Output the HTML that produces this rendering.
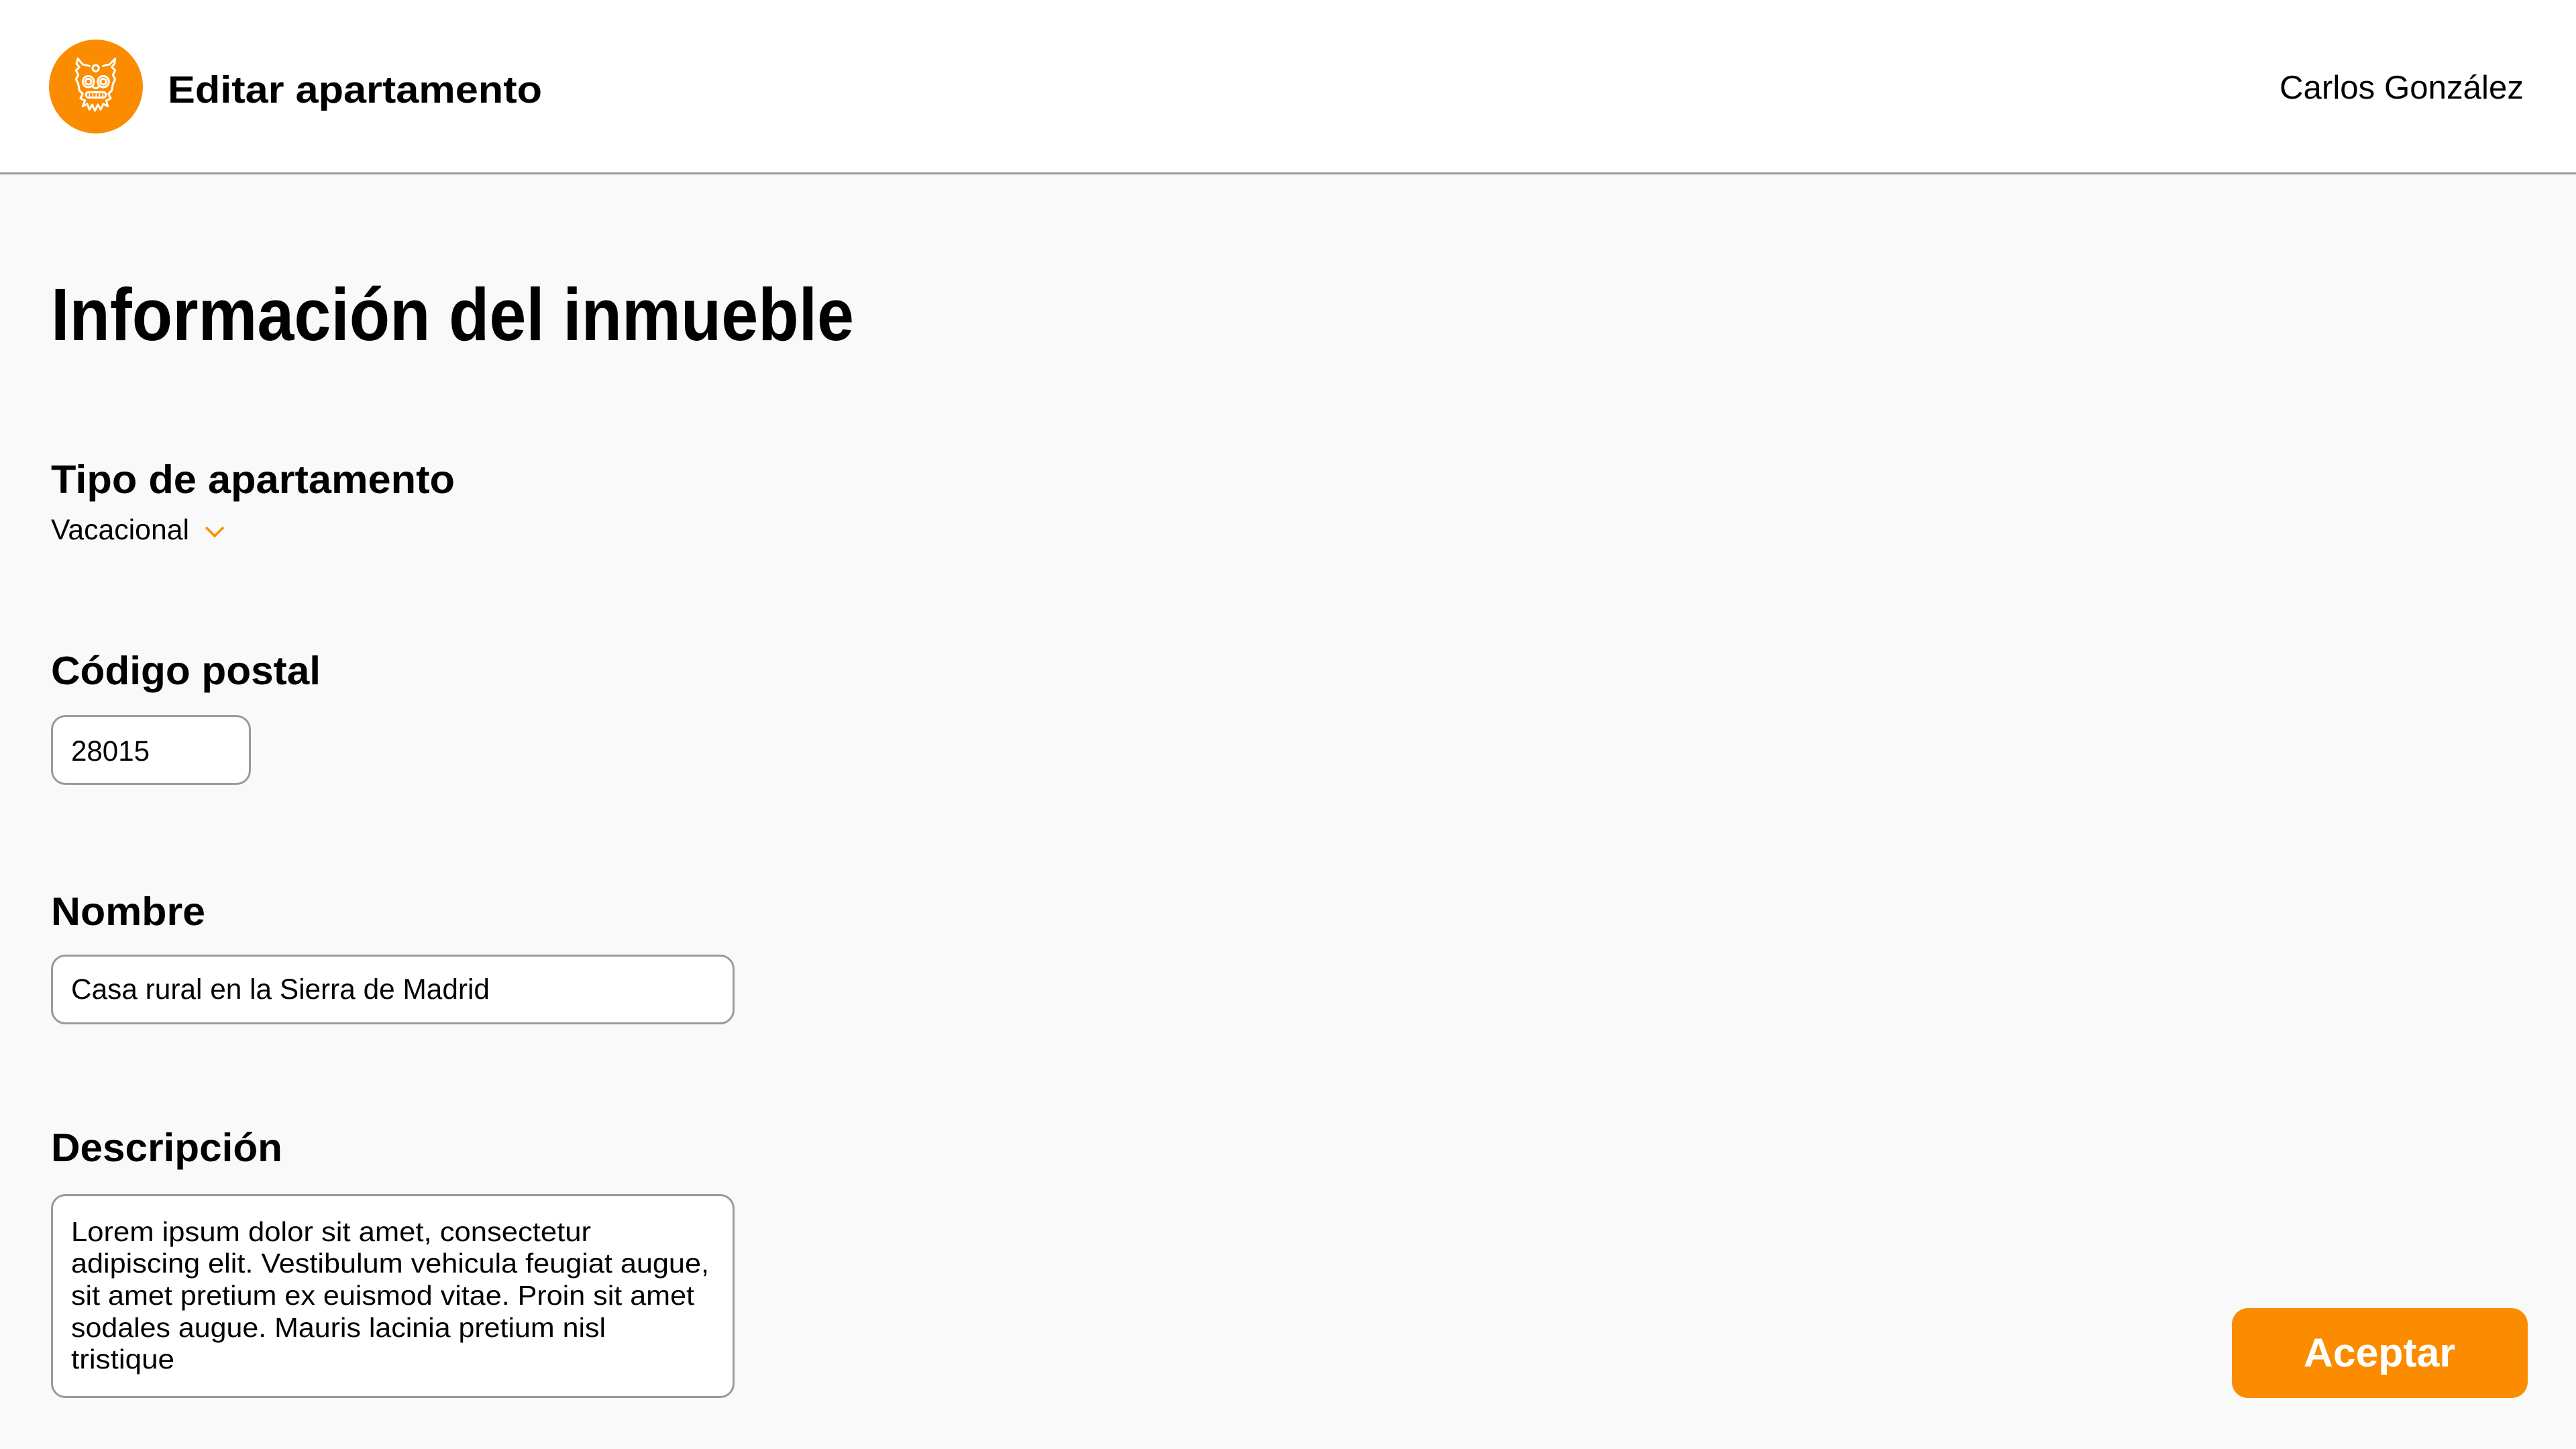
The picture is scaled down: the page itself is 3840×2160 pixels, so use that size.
<!DOCTYPE html>
<html><head><meta charset="utf-8"><style>
html,body{margin:0;padding:0;width:3840px;height:2160px;overflow:hidden;background:#f9f9f9}
svg{display:block}
text{font-family:"Liberation Sans",sans-serif;fill:#000}
</style></head><body>
<svg width="3840" height="2160" viewBox="0 0 3840 2160" xmlns="http://www.w3.org/2000/svg">
<rect x="0" y="0" width="3840" height="258" fill="#ffffff"/>
<rect x="0" y="257" width="3840" height="3" fill="#9a9a9a"/>
<rect x="0" y="260" width="3840" height="1900" fill="#f9f9f9"/>

<circle cx="143" cy="129" r="70" fill="#fb8c00"/>
<g transform="translate(100,80) scale(0.3333)" fill="none" stroke="#fff" stroke-width="9" stroke-linejoin="round" stroke-linecap="round">
  <path d="M48 22 L70 48 L100 55 M215 22 L190 48 L160 55"/>
  <path d="M48 22 L42 45 L55 60 L40 75 L50 95 L40 115 L50 135 L55 165 L70 180 L60 200 L80 210 L70 235 L90 225 L100 250 L112 228 L125 255 L138 228 L150 250 L162 225 L182 235 L175 210 L195 200 L185 180 L200 165 L205 135 L215 115 L205 95 L215 75 L200 60 L212 45 L215 22"/>
  <circle cx="128" cy="65" r="14"/>
  <circle cx="95" cy="125" r="25"/><circle cx="95" cy="125" r="13"/>
  <circle cx="162" cy="125" r="25"/><circle cx="162" cy="125" r="13"/>
  <path d="M115 148 Q128 162 141 148"/>
  <rect x="85" y="172" width="88" height="24" rx="10"/>
  <path d="M100 176 V192 M115 176 V192 M130 176 V192 M145 176 V192 M160 176 V192" stroke-width="5"/>
</g>

<text x="250" y="153" font-size="57" font-weight="bold" textLength="558" lengthAdjust="spacingAndGlyphs">Editar apartamento</text>
<text x="3398" y="147" font-size="49" textLength="364" lengthAdjust="spacingAndGlyphs">Carlos González</text>

<text x="76" y="507" font-size="110" font-weight="bold" textLength="1197" lengthAdjust="spacingAndGlyphs">Información del inmueble</text>

<text x="76" y="735" font-size="59" font-weight="bold" textLength="602" lengthAdjust="spacingAndGlyphs">Tipo de apartamento</text>
<text x="76" y="804" font-size="43" textLength="206" lengthAdjust="spacingAndGlyphs">Vacacional</text>
<path d="M307 786 L320 799 L333 786" fill="none" stroke="#fb8c00" stroke-width="3.5"/>

<text x="76" y="1020" font-size="59" font-weight="bold" textLength="402" lengthAdjust="spacingAndGlyphs">Código postal</text>
<rect x="77.5" y="1067.5" width="295" height="101" rx="20" fill="#fff" stroke="#9a9a9a" stroke-width="3"/>
<text x="106" y="1134" font-size="43" textLength="117" lengthAdjust="spacingAndGlyphs">28015</text>

<text x="76" y="1379" font-size="59" font-weight="bold" textLength="230" lengthAdjust="spacingAndGlyphs">Nombre</text>
<rect x="77.5" y="1424.5" width="1016" height="101" rx="20" fill="#fff" stroke="#9a9a9a" stroke-width="3"/>
<text x="106" y="1489" font-size="43" textLength="624" lengthAdjust="spacingAndGlyphs">Casa rural en la Sierra de Madrid</text>

<text x="76" y="1731" font-size="59" font-weight="bold" textLength="345" lengthAdjust="spacingAndGlyphs">Descripción</text>
<rect x="77.5" y="1781.5" width="1016" height="301" rx="20" fill="#fff" stroke="#9a9a9a" stroke-width="3"/>
<g font-size="41">
<text x="106" y="1850" textLength="775" lengthAdjust="spacingAndGlyphs">Lorem ipsum dolor sit amet, consectetur</text>
<text x="106" y="1897" textLength="951" lengthAdjust="spacingAndGlyphs">adipiscing elit. Vestibulum vehicula feugiat augue,</text>
<text x="106" y="1945" textLength="929" lengthAdjust="spacingAndGlyphs">sit amet pretium ex euismod vitae. Proin sit amet</text>
<text x="106" y="1993" textLength="797" lengthAdjust="spacingAndGlyphs">sodales augue. Mauris lacinia pretium nisl</text>
<text x="106" y="2040" textLength="154" lengthAdjust="spacingAndGlyphs">tristique</text>
</g>

<rect x="3327" y="1950" width="441" height="134" rx="24" fill="#fb8c00"/>
<text x="3434" y="2037" font-size="60" font-weight="bold" fill="#fff" style="fill:#fff" textLength="226" lengthAdjust="spacingAndGlyphs">Aceptar</text>
</svg>
</body></html>
